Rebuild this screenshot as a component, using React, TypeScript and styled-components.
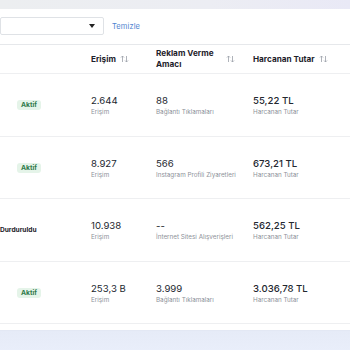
import React from 'react';
import styled, {createGlobalStyle} from 'styled-components'

const Global = createGlobalStyle`
  html, body {
    margin: 0;
    padding: 0;
    background: #ffffff;
  }
  body {
    font-family: 'Inter', 'Liberation Sans', sans-serif;
    width: 350px;
    height: 350px;
    overflow: hidden;
  }
`

const Page = styled.div`
  display: flex;
  flex-direction: column;
  width: 350px;
  height: 350px;
  background: #ffffff;
`

const TopBand = styled.div`
  height: 9px;
  flex-shrink: 0;
  background: linear-gradient(90deg, #eceef0 0%, #ecedf3 60%, #e9e9f6 100%);
`

const FilterBar = styled.div`
  display: flex;
  align-items: center;
  gap: 8px;
  padding: 8px 0 0 0;
  height: 18px;
`

const Select = styled.div`
  display: flex;
  align-items: center;
  justify-content: flex-end;
  box-sizing: border-box;
  width: 104px;
  height: 18px;
  padding-right: 8px;
  border: 1px solid #dfe2e6;
  border-radius: 2px;
  background: #fff;
`

const Caret = styled.span`
  width: 0;
  height: 0;
  border-left: 3px solid transparent;
  border-right: 3px solid transparent;
  border-top: 4px solid #222;
`

const ClearLink = styled.span`
  font-size: 7.5px;
  color: #4f84cf;
  letter-spacing: 0.1px;
`

const Table = styled.div`
  margin-top: 9px;
  display: flex;
  flex-direction: column;
`

const Row = styled.div<{head?: boolean}>`
  display: grid;
  grid-template-columns: 91px 65px 97px 1fr;
  align-items: center;
  height: ${p => p.head ? '30px' : '62.5px'};
  border-top: 1px solid ${p => p.head ? '#e6e8eb' : 'transparent'};
  border-bottom: 1px solid #eeeff1;
  box-sizing: border-box;
`

const HeadCell = styled.div`
  display: flex;
  align-items: center;
  font-size: 8.2px;
  font-weight: 700;
  color: #1e222b;
  line-height: 11px;
`

const HeadWide = styled(HeadCell)`
  justify-content: space-between;
  padding-right: 18px;
`

const Sort = () => (
    <svg width="9" height="8" viewBox="0 0 9 8" style={{marginLeft: 4}}>
        <path d="M2.5 7V1M1 2.5L2.5 1L4 2.5" stroke="#9aa0a8" strokeWidth="0.8" fill="none"/>
        <path d="M6.5 1V7M5 5.5L6.5 7L8 5.5" stroke="#9aa0a8" strokeWidth="0.8" fill="none"/>
    </svg>
)

const StatusCell = styled.div<{paused?: boolean}>`
  display: flex;
  padding-left: ${p => p.paused ? '0' : '17px'};
`

const Badge = styled.span`
  display: inline-block;
  padding: 1px 4px;
  border-radius: 3px;
  background: #e5f4e9;
  color: #2f7a4b;
  font-size: 6.8px;
  font-weight: 700;
  line-height: 8px;
`

const Paused = styled.span`
  font-size: 6.6px;
  font-weight: 700;
  color: #1c2029;
`

const ValueCell = styled.div`
  display: flex;
  flex-direction: column;
  gap: 1px;
  margin-top: 1px;
`

const Value = styled.span<{strong?: boolean}>`
  font-size: 9.6px;
  font-weight: ${p => p.strong ? 500 : 400};
  color: #23272f;
  line-height: 12px;
`

const Sub = styled.span`
  font-size: 6.3px;
  color: #8d9199;
  line-height: 8px;
  white-space: nowrap;
`

const BottomBand = styled.div`
  margin-top: auto;
  height: 19px;
  background: linear-gradient(180deg, #e6ebf7 0%, #e9eefa 100%);
  border-top: 1px solid #e3e8f4;
`

const rows = [
    {status: 'Aktif', reach: '2.644', result: '88', resultLabel: 'Bağlantı Tıklamaları', spent: '55,22 TL'},
    {status: 'Aktif', reach: '8.927', result: '566', resultLabel: 'Instagram Profili Ziyaretleri', spent: '673,21 TL'},
    {status: 'Durduruldu', reach: '10.938', result: '--', resultLabel: 'İnternet Sitesi Alışverişleri', spent: '562,25 TL'},
    {status: 'Aktif', reach: '253,3 B', result: '3.999', resultLabel: 'Bağlantı Tıklamaları', spent: '3.036,78 TL'},
]

const App = () => {
    return (
        <Page>
            <Global/>
            <TopBand/>
            <FilterBar>
                <Select><Caret/></Select>
                <ClearLink>Temizle</ClearLink>
            </FilterBar>
            <Table>
                <Row head>
                    <div/>
                    <HeadCell>Erişim <Sort/></HeadCell>
                    <HeadWide><span>Reklam Verme<br/>Amacı</span><Sort/></HeadWide>
                    <HeadCell>Harcanan Tutar <Sort/></HeadCell>
                </Row>
                {rows.map((row, index) => {
                    const paused = row.status !== 'Aktif'
                    return <Row key={index}>
                        <StatusCell paused={paused}>
                            {paused ? <Paused>{row.status}</Paused> : <Badge>{row.status}</Badge>}
                        </StatusCell>
                        <ValueCell>
                            <Value>{row.reach}</Value>
                            <Sub>Erişim</Sub>
                        </ValueCell>
                        <ValueCell>
                            <Value>{row.result}</Value>
                            <Sub>{row.resultLabel}</Sub>
                        </ValueCell>
                        <ValueCell>
                            <Value strong>{row.spent}</Value>
                            <Sub>Harcanan Tutar</Sub>
                        </ValueCell>
                    </Row>
                })}
            </Table>
            <BottomBand/>
        </Page>
    );
}

export default App;
